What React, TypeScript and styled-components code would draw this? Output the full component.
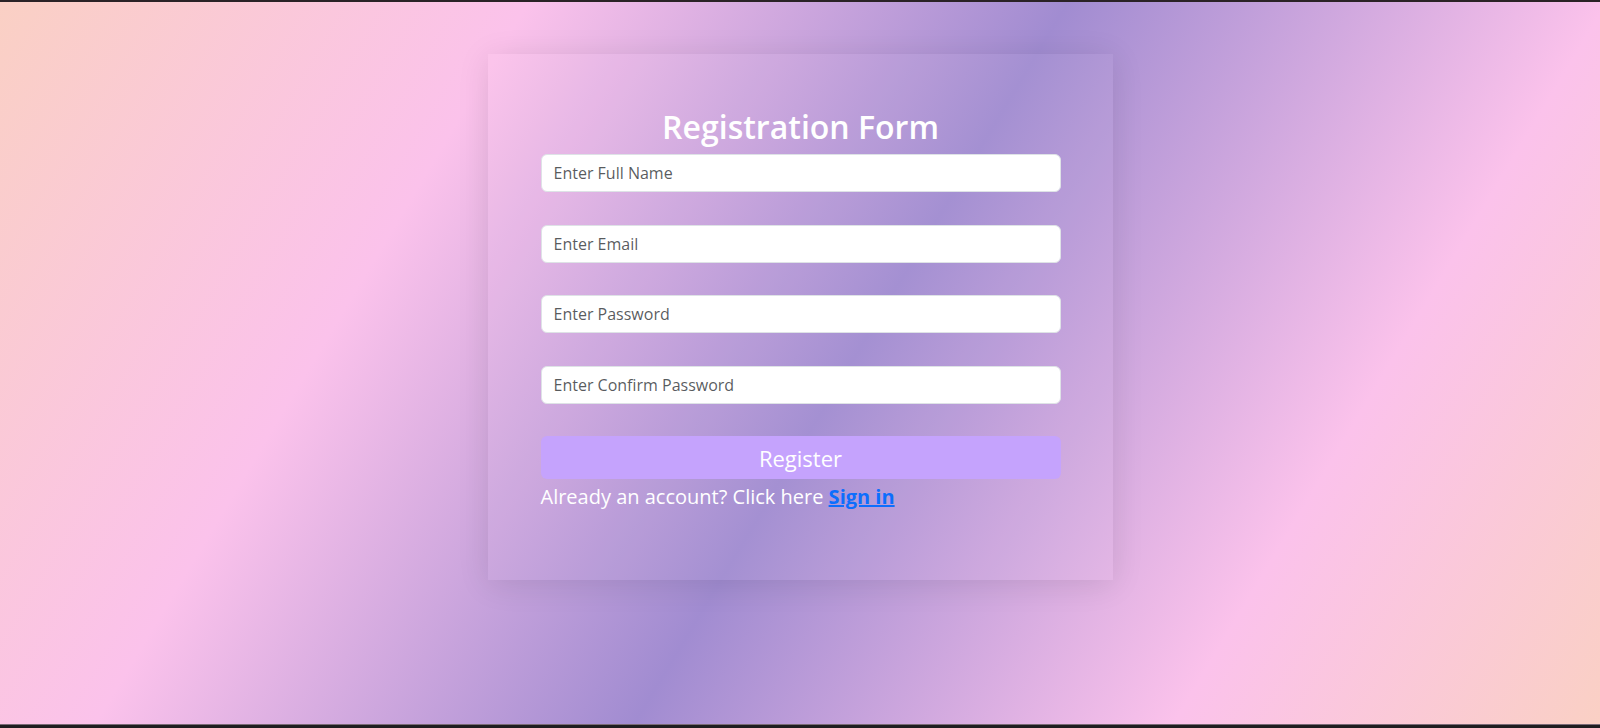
import React from "react";
import styled, { createGlobalStyle } from "styled-components";

const GlobalStyle = createGlobalStyle`
  html, body { margin: 0; padding: 0; }
  body { font-family: "Open Sans", "Noto Sans", sans-serif; }
  * { box-sizing: border-box; }
`;

const Page = styled.div`
  height: 728px;
  display: flex;
  flex-direction: column;
  align-items: center;
  border-top: 2px solid #2a2226;
  border-bottom: 3px solid #1f1d20;
  box-shadow: inset 0 -1px 0 #7a6a76;
  background: linear-gradient(
    121deg,
    #fad0c4 0%,
    #fbc2eb 26%,
    #a18cd1 52.5%,
    #fbc2eb 79%,
    #fad0c4 100%
  );
`;

const Card = styled.form`
  margin-top: 52px;
  width: 625px;
  height: 526px;
  padding: 54px 52px 0 53px;
  display: flex;
  flex-direction: column;
  background: rgba(255, 255, 255, 0.04);
  box-shadow: 0 4px 30px rgba(0, 0, 0, 0.1);
`;

const Title = styled.h2`
  margin: 0 0 8px;
  font-size: 32px;
  line-height: 1.2;
  font-weight: 600;
  color: #ffffff;
  text-align: center;
`;

const Input = styled.input`
  display: block;
  width: 100%;
  height: 38px;
  margin: 0 0 32.5px;
  padding: 6px 12px;
  font-family: inherit;
  font-size: 16px;
  color: #212529;
  background: #ffffff;
  border: 1px solid #dee2e6;
  border-radius: 6px;
  outline: none;
  &::placeholder {
    color: rgba(33, 37, 41, 0.75);
  }
`;

const SubmitButton = styled.button`
  width: 100%;
  height: 43px;
  border: none;
  border-radius: 6px;
  background: #c5a3fd;
  color: #ffffff;
  font-family: inherit;
  font-size: 22px;
  cursor: pointer;
`;

const Footer = styled.p`
  margin: 3px 0 0;
  font-size: 20px;
  line-height: 1.5;
  color: #ffffff;
`;

const SignInLink = styled.a`
  color: #0d6efd;
  font-weight: 700;
  text-decoration: underline;
`;

export default function App() {
  return (
    <>
      <GlobalStyle />
      <Page>
        <Card onSubmit={(e) => e.preventDefault()}>
          <Title>Registration Form</Title>
          <Input type="text" placeholder="Enter Full Name" />
          <Input type="email" placeholder="Enter Email" />
          <Input type="password" placeholder="Enter Password" />
          <Input type="password" placeholder="Enter Confirm Password" />
          <SubmitButton type="submit">Register</SubmitButton>
          <Footer>
            Already an account? Click here <SignInLink href="#">Sign in</SignInLink>
          </Footer>
        </Card>
      </Page>
    </>
  );
}
